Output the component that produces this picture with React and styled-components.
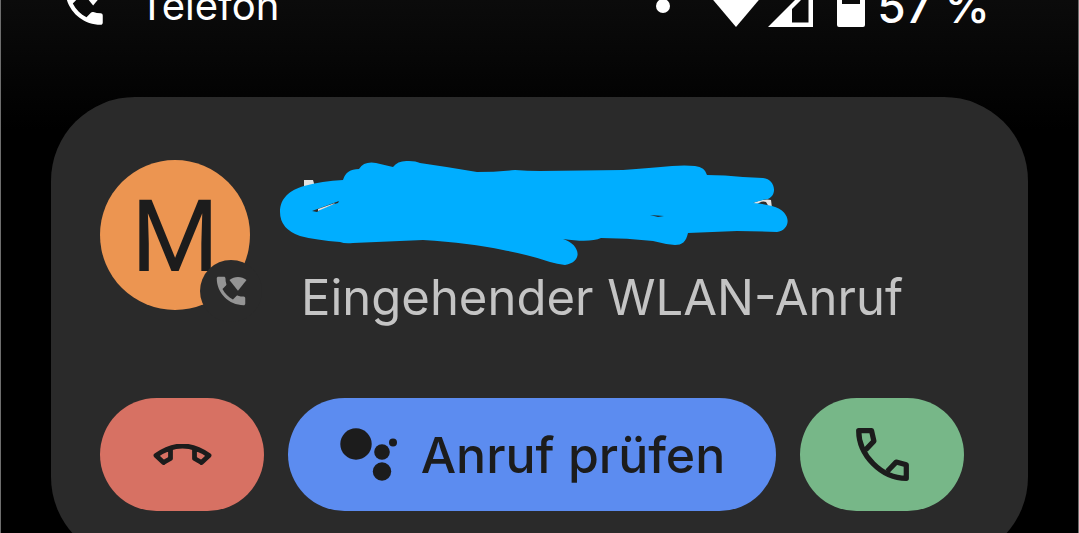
import React from "react";
import styled, { createGlobalStyle } from "styled-components";

const ink = "#1c1c1c";
const surface = "#2a2a2a";

const GlobalStyle = createGlobalStyle`
  * { box-sizing: border-box; }
  body {
    margin: 0;
    background: #000;
    font-family: Inter, "Liberation Sans", sans-serif;
    overflow: hidden;
  }
`;

const Screen = styled.main`
  height: 100vh;
  overflow: hidden;
  padding: 0 50px;
  border: solid #6e6e6e;
  border-width: 0 1px;
  background: linear-gradient(#0b0b0b, #000 130px);
`;

const StatusBar = styled.header`
  display: flex;
  align-items: center;
  justify-content: space-between;
  height: 100px;
  margin-top: -44px;
  padding: 0 38px 0 8px;
  color: #fff;
`;

const StatusGroup = styled.div`
  display: flex;
  align-items: center;
  gap: ${(p) => p.$gap}px;
`;

const StatusText = styled.span`
  font-size: ${(p) => p.$size}px;
  font-weight: ${(p) => p.$weight};
  line-height: 48px;
`;

const Dot = styled.span`
  width: 14px;
  height: 14px;
  margin-right: 12px;
  border-radius: 50%;
  background: #fff;
`;

const Card = styled.section`
  margin-top: 41px;
  padding: 63px 64px 50px 49px;
  border-radius: 84px;
  background: ${surface};
`;

const Caller = styled.div`
  display: flex;
  gap: 51px;
`;

const Avatar = styled.div`
  position: relative;
  flex: none;
  width: 150px;
  height: 150px;
  border-radius: 50%;
  background: #ec9551;
  color: ${ink};
  font-family: Roboto, sans-serif;
  font-size: 101px;
  line-height: 153px;
  text-align: center;
`;

const Badge = styled.span`
  position: absolute;
  right: -12px;
  bottom: -12px;
  display: grid;
  place-items: center;
  width: 62px;
  height: 62px;
  border-radius: 50%;
  background: ${surface};
  color: #949494;
`;

const Details = styled.div`
  min-width: 0;
`;

const Redaction = styled.svg`
  display: block;
  margin-left: -21px;
`;

const CallType = styled.p`
  margin: 0;
  color: #c4c4c4;
  font-size: 49px;
  line-height: 64px;
  white-space: nowrap;
`;

const Actions = styled.div`
  display: flex;
  gap: 24px;
  margin-top: 68px;
`;

const ActionButton = styled.button`
  display: flex;
  align-items: center;
  justify-content: center;
  gap: 24px;
  flex: ${(p) => (p.$wide ? "1" : "0 0 164px")};
  height: 113px;
  padding: 0;
  border: 0;
  border-radius: 57px;
  background: ${(p) => p.$color};
  color: ${ink};
  font: 500 50px Inter, "Liberation Sans", sans-serif;
  white-space: nowrap;
`;

const WifiCallIcon = ({ size }) => (
  <svg width={size} height={size} viewBox="0 0 24 24" fill="currentColor" aria-hidden="true">
    <path d="M20 15.5c-1.25 0-2.45-.2-3.57-.57-.35-.11-.74-.03-1.02.24l-2.2 2.2c-2.83-1.44-5.15-3.75-6.59-6.59l2.2-2.21c.28-.26.36-.65.25-1C8.7 6.45 8.5 5.25 8.5 4c0-.55-.45-1-1-1H4c-.55 0-1 .45-1 1 0 9.39 7.61 17 17 17 .55 0 1-.45 1-1v-3.5c0-.55-.45-1-1-1z" />
    <path d="M16.4 11.8 11 5.1C14.2 2.5 18.6 2.5 21.8 5.1Z" />
  </svg>
);

const WifiIcon = () => (
  <svg width="60" height="42" viewBox="0 0 60 42" fill="currentColor" aria-hidden="true">
    <path d="M30 42 0 6.5Q30-6 60 6.5Z" />
  </svg>
);

const SignalIcon = () => (
  <svg width="45" height="42" viewBox="0 0 45 42" fill="currentColor" aria-hidden="true">
    <path fillRule="evenodd" d="M0 42 42 0H45V42ZM24 24V37.5H40.5V7.5Z" />
  </svg>
);

const BatteryIcon = () => (
  <svg width="28" height="42" viewBox="0 0 28 42" fill="currentColor" aria-hidden="true">
    <path fillRule="evenodd" d="M8 0H20V4H26Q28 4 28 6V40Q28 42 26 42H2Q0 42 0 40V6Q0 4 2 4H8ZM5 9V19H23V9Z" />
  </svg>
);

const HangUpIcon = () => (
  <svg width="59" height="22" viewBox="-1 0 59 22" fill="none" stroke="currentColor" strokeWidth="4.8" strokeLinejoin="round" aria-hidden="true">
    <path d="M2 11.5Q28.5-7.5 55 11.5L47.5 18.5 40.5 14.5V5M2 11.5 9.5 18.5 16.5 14.5V5M2 11.5 9.5 18.5M55 11.5 47.5 18.5" strokeLinecap="round" />
  </svg>
);

const AssistantIcon = () => (
  <svg width="58" height="53" viewBox="0 0 58 53" fill="currentColor" aria-hidden="true">
    <circle cx="17" cy="16" r="15.7" />
    <circle cx="43" cy="24" r="7.8" />
    <circle cx="43" cy="43.5" r="9.2" />
    <circle cx="54" cy="14.5" r="4" />
  </svg>
);

const AnswerIcon = () => (
  <svg width="53" height="53" viewBox="0 0 157 157" fill="none" stroke="currentColor" strokeWidth="15.5" strokeLinejoin="round" aria-hidden="true">
    <path d="M29 64 53 39 46 8H8C8 80 75 149 149 149V109L119 101 93 128" />
  </svg>
);

const Scribble = () => (
  <Redaction width="508" height="106" viewBox="0 0 508 106" aria-hidden="true">
    <path fill="#e2e2e2" d="M24 20H33L36 30H24ZM470 44Q484 38 491 40L492 48H470Z" />
    <path fill={surface} d="M475 46Q481 40 486 42L489 47Z" />
    <path
      fill="#00aeff"
      d="M0 52C0 38 10 30 24 26Q42 21 63 20Q66 9 79 9Q84 1 96 3L113 7Q118 0 129 1Q136 1 140 3Q168 7 197 12Q216 12 235 10Q247 11 260 11L343 10Q370 8 392 6Q405 5 415 6Q425 7 427 15Q445 15 463 17L483 18C495 19 498 35 488 39Q480 40 473 43Q484 44 492 46C514 52 510 71 497 72Q477 71 457 71L408 73C406 82 402 85 395 85Q384 84 373 81Q347 78 321 78Q310 83 283 79C300 84 304 102 285 105Q277 104 270 102Q246 94 223 90Q190 83 143 80L73 83Q65 84 60 82Q36 80 20 76Q0 69 0 52Z"
    />
    <path fill={surface} d="M32 51 59 41 58 43Q45 46 37 52ZM370 55 384 56 378 57Z" />
    <path fill="#e2e2e2" d="M38 49 55 43 54 44 38 51Z" />
  </Redaction>
);

export default function App() {
  return (
    <>
      <GlobalStyle />
      <Screen>
        <StatusBar>
          <StatusGroup $gap={30}>
            <WifiCallIcon size={50} />
            <StatusText $size={40} $weight={400}>Telefon</StatusText>
          </StatusGroup>
          <StatusGroup $gap={24}>
            <Dot />
            <StatusGroup $gap={2}>
              <WifiIcon />
              <SignalIcon />
            </StatusGroup>
            <StatusGroup $gap={12}>
              <BatteryIcon />
              <StatusText $size={46} $weight={500}>57 %</StatusText>
            </StatusGroup>
          </StatusGroup>
        </StatusBar>
        <Card aria-label="Eingehender Anruf">
          <Caller>
            <Avatar>
              M
              <Badge>
                <WifiCallIcon size={38} />
              </Badge>
            </Avatar>
            <Details>
              <Scribble />
              <CallType>Eingehender WLAN-Anruf</CallType>
            </Details>
          </Caller>
          <Actions>
            <ActionButton $color="#d77163" aria-label="Ablehnen">
              <HangUpIcon />
            </ActionButton>
            <ActionButton $color="#5c8cf0" $wide>
              <AssistantIcon />
              Anruf prüfen
            </ActionButton>
            <ActionButton $color="#77b788" aria-label="Annehmen">
              <AnswerIcon />
            </ActionButton>
          </Actions>
        </Card>
      </Screen>
    </>
  );
}
